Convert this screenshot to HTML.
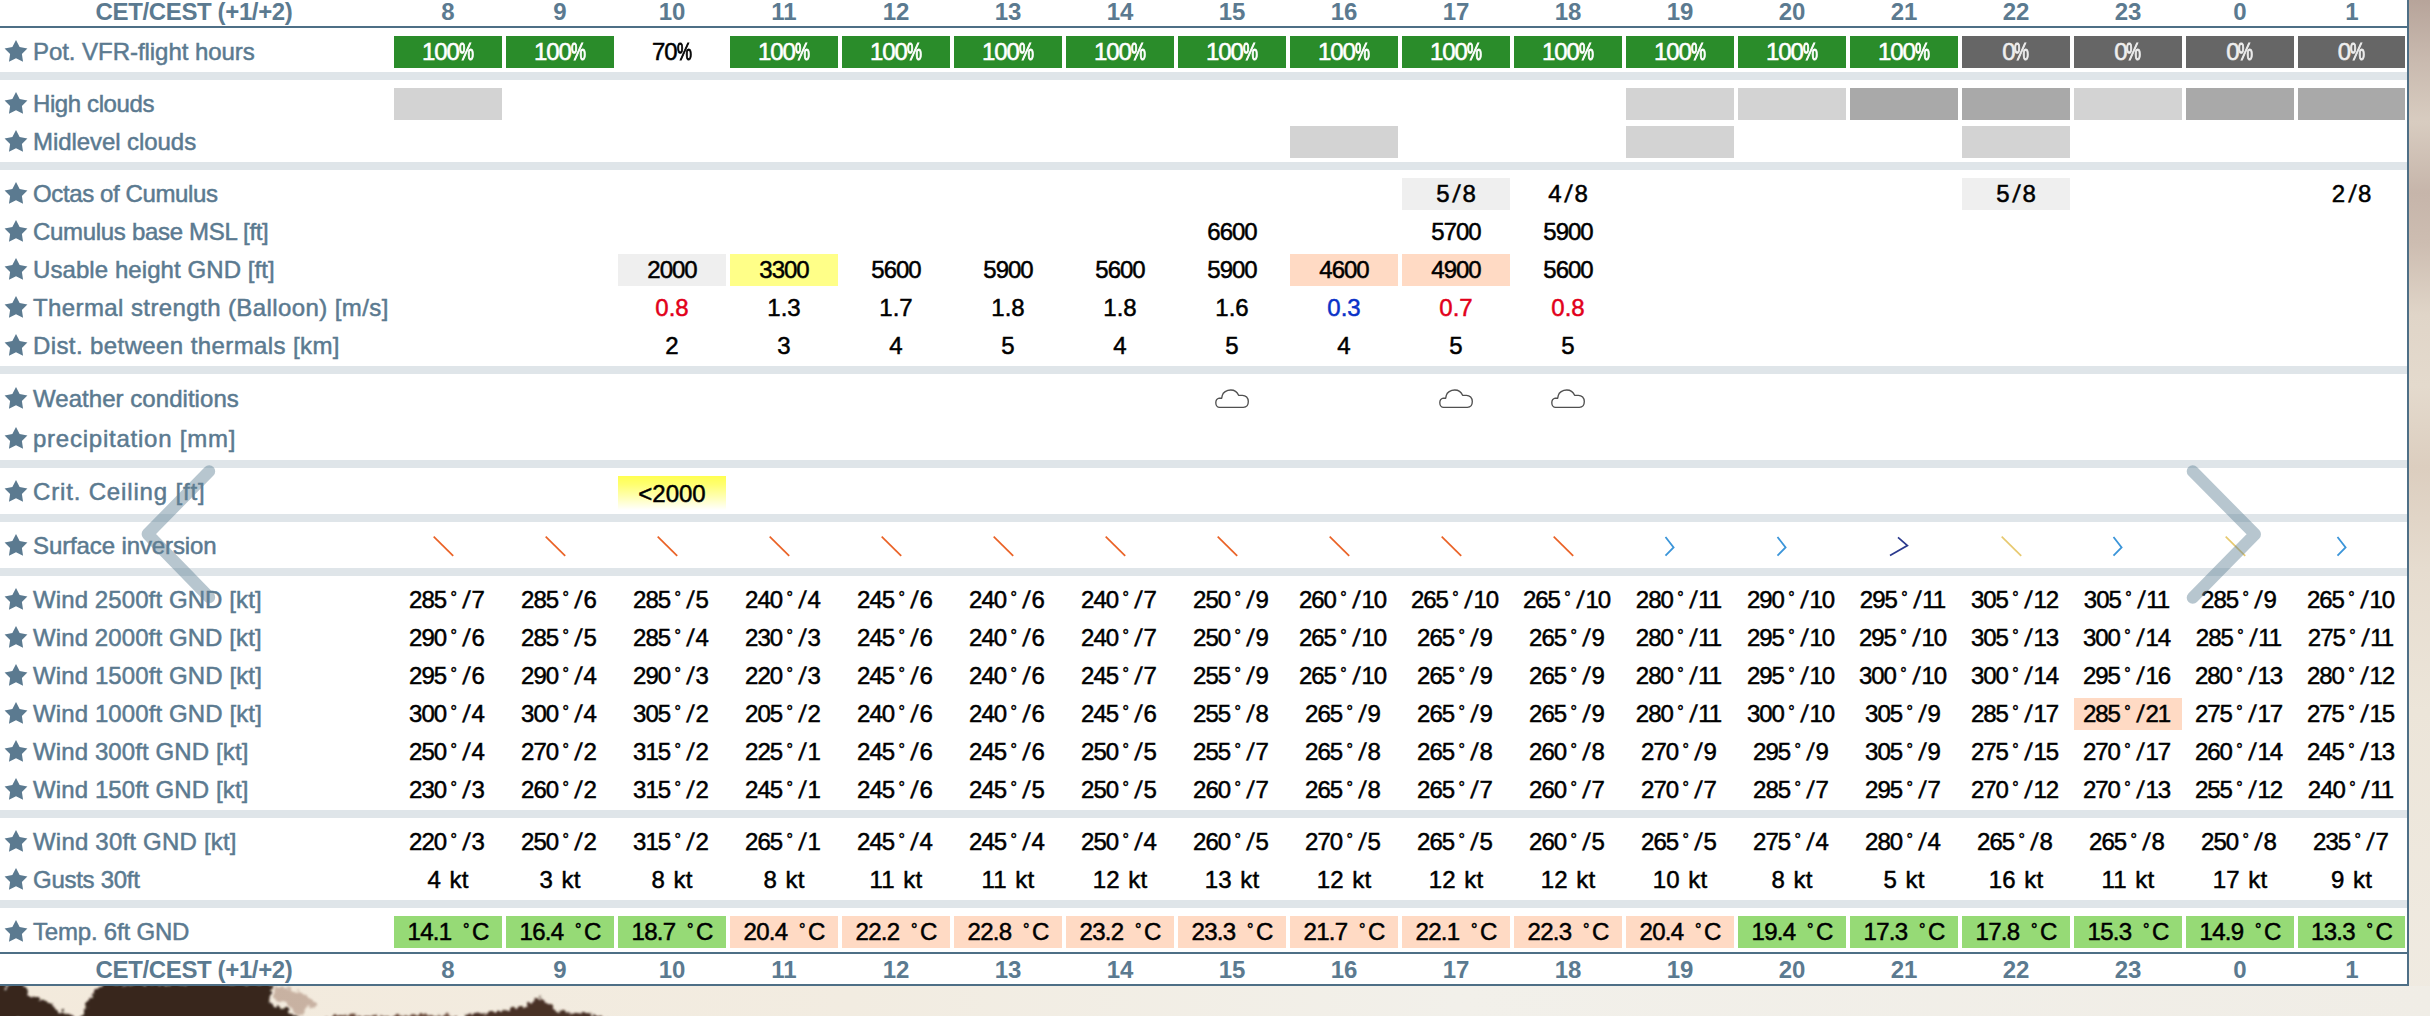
<!DOCTYPE html>
<html lang="en"><head><meta charset="utf-8"><title>Forecast table</title>
<style>
html,body{margin:0;padding:0}
body{width:2430px;height:1016px;overflow:hidden;position:relative;background:#efe7da;font-family:"Liberation Sans",sans-serif;font-size:24px;color:#000}
#bg{position:absolute;left:0;top:0;width:2430px;height:1016px}
#tb{position:absolute;left:0;top:0;width:2407px;height:984px;background:#fff;border-right:2px solid #4e6f86;border-bottom:2px solid #4e6f86}
.line{position:absolute;left:0;width:2407px;height:2px;background:#4e6f86}
.sep{position:absolute;left:0;width:2407px;height:8px;background:#dfe5e9}
.st{position:absolute;left:3.7px;width:24px;height:24px;fill:#5b7a90}
.lb{position:absolute;left:33px;height:32px;line-height:32px;white-space:nowrap;color:#5b7a90}
.hl{position:absolute;left:0;width:388px;text-align:center;height:32px;line-height:32px;font-weight:bold;color:#5b7a90;white-space:nowrap}
.c{position:absolute;width:108px;height:32px;line-height:32px;text-align:center;white-space:nowrap}
.c i{font-style:normal}
.c,.lb{-webkit-text-stroke:0.5px currentColor}
.c.h{-webkit-text-stroke:0}
.c.g,.c.z{-webkit-text-stroke:0.55px currentColor;letter-spacing:-1.2px}
.c .pc{-webkit-text-stroke:1px currentColor}
.oc .s{margin:0 2.6px 0 3.6px}
.w{width:105px;padding-right:3px}
.n{letter-spacing:-1px}
.w{letter-spacing:-1px}
.d{font-size:16px;position:relative;top:-5.4px;margin:0 4px 0 4.4px;letter-spacing:0}
.s{display:inline-block;transform:skewX(-6deg);margin:0 1.6px 0 2.4px;letter-spacing:0}
.pc{display:inline-block;transform:scaleX(0.7);transform-origin:0 50%;margin-right:-6px;letter-spacing:0}
.hl{letter-spacing:-0.37px}
.k{word-spacing:1.6px;letter-spacing:0.2px}
.t{letter-spacing:-0.7px;word-spacing:5.5px}
.dt{font-size:16px;position:relative;top:-5.4px;margin:0 2.6px 0 0;letter-spacing:0}
.h{font-weight:bold;color:#5b7a90}
.g{background:#2a8c2a;color:#fff}
.z{background:#666;color:#eee}
.lg{background:#d3d3d3}.dg{background:#a9a9a9}
.e{background:#efefef}.y{background:#ffff88}.pe{background:#ffdac4}.gr{background:#96da76}
.r{color:#e2001a}.b{color:#0a32c8}
.cc{height:34px;line-height:36px;background:linear-gradient(#ffff50,#ffff70 25%,#ffffb0 60%,#ffffff)}
.cl{position:absolute;left:27px;top:-1px;width:55px;height:33px;fill:none;stroke:#505050;stroke-width:1.35;stroke-linejoin:round}
.ov{position:absolute;left:0;top:0;pointer-events:none}
</style></head><body>
<svg id="bg" viewBox="0 0 2430 1016" preserveAspectRatio="none">
<defs>
<linearGradient id="gr" x1="0" y1="0" x2="0" y2="1">
<stop offset="0" stop-color="#b7a49a"/><stop offset="0.06" stop-color="#c9baaf"/><stop offset="0.12" stop-color="#d8ccc0"/>
<stop offset="0.19" stop-color="#c6b5aa"/><stop offset="0.24" stop-color="#cdbdb1"/><stop offset="0.31" stop-color="#e0d5c8"/>
<stop offset="0.38" stop-color="#e4dacd"/><stop offset="0.46" stop-color="#dccebf"/><stop offset="0.56" stop-color="#e6dccf"/>
<stop offset="0.7" stop-color="#ece5d9"/><stop offset="1" stop-color="#f0ebe2"/>
</linearGradient>
<linearGradient id="gb" x1="0" y1="0" x2="1" y2="0">
<stop offset="0" stop-color="#f3eadc"/><stop offset="0.35" stop-color="#f2ece1"/><stop offset="0.6" stop-color="#f2f0ea"/><stop offset="1" stop-color="#f0ede6"/>
</linearGradient>
<filter id="bl" x="-5%" y="-50%" width="110%" height="200%"><feTurbulence type="fractalNoise" baseFrequency="0.18" numOctaves="2" seed="7" result="n"/><feDisplacementMap in="SourceGraphic" in2="n" scale="9" xChannelSelector="R" yChannelSelector="G"/><feGaussianBlur stdDeviation="0.9"/></filter>
</defs>
<rect x="2409" y="0" width="21" height="1016" fill="url(#gr)"/>
<rect x="0" y="986" width="2430" height="30" fill="url(#gb)"/>
<g filter="url(#bl)" fill="#38251f">
<path d="M-5 984 L3 984 L5 990 L9 984 L25 984 L27 990 L29 996 L40 999 L50 1003 L55 1008 L60 1011 L70 1014 L80 1020 L-5 1020 Z"/>
<path d="M101 984 L122 984 L124 988 L128 984 L275 984 L272 990 L270 996 L269 1003 L280 1007 L290 1011 L296 1016 L302 1022 L78 1022 L83 1012 L86 1006 L88 1001 L92 996 L96 990 Z"/>
<path d="M456 1020 L470 1014 L492 1013 L510 1009 L524 1007 L534 1001 L541 998.5 L548 1003 L556 1010 L575 1013 L600 1016 L610 1020 Z" fill="#4a3128"/>
<path d="M320 1020 L335 1015 L380 1016.5 L420 1015 L456 1016 L456 1020 Z" fill="#6a4c3c"/>
</g>
<g fill="#7a4a34" opacity="0.35" filter="url(#bl)">
<path d="M276 986 L288 987 L292 992 L300 990 L306 996 L314 1000 L318 1006 L306 1008 L300 1016 L292 1010 L284 1003 L274 1000 Z"/>
</g>
</svg>
<div id="tb">
<div class="hl" style="top:-4px">CET/CEST (+1/+2)</div>
<div class="c h" style="left:394px;top:-4px">8</div>
<div class="c h" style="left:506px;top:-4px">9</div>
<div class="c h" style="left:618px;top:-4px">10</div>
<div class="c h" style="left:730px;top:-4px">11</div>
<div class="c h" style="left:842px;top:-4px">12</div>
<div class="c h" style="left:954px;top:-4px">13</div>
<div class="c h" style="left:1066px;top:-4px">14</div>
<div class="c h" style="left:1178px;top:-4px">15</div>
<div class="c h" style="left:1290px;top:-4px">16</div>
<div class="c h" style="left:1402px;top:-4px">17</div>
<div class="c h" style="left:1514px;top:-4px">18</div>
<div class="c h" style="left:1626px;top:-4px">19</div>
<div class="c h" style="left:1738px;top:-4px">20</div>
<div class="c h" style="left:1850px;top:-4px">21</div>
<div class="c h" style="left:1962px;top:-4px">22</div>
<div class="c h" style="left:2074px;top:-4px">23</div>
<div class="c h" style="left:2186px;top:-4px">0</div>
<div class="c h" style="left:2298px;top:-4px">1</div>
<div class="line" style="top:26px"></div>
<svg class="st" style="top:40.0px" viewBox="0 0 24 24"><polygon points="12.00,0.10 15.64,7.08 23.41,8.39 17.90,14.02 19.05,21.81 12.00,18.30 4.95,21.81 6.10,14.02 0.59,8.39 8.36,7.08"/></svg>
<div class="lb" style="top:36px;letter-spacing:-0.05px">Pot. VFR-flight hours</div>
<div class="c n a g" style="left:394px;top:36px;">100<i class="pc">%</i></div>
<div class="c n a g" style="left:506px;top:36px;">100<i class="pc">%</i></div>
<div class="c n a p" style="left:618px;top:36px;">70<i class="pc">%</i></div>
<div class="c n a g" style="left:730px;top:36px;">100<i class="pc">%</i></div>
<div class="c n a g" style="left:842px;top:36px;">100<i class="pc">%</i></div>
<div class="c n a g" style="left:954px;top:36px;">100<i class="pc">%</i></div>
<div class="c n a g" style="left:1066px;top:36px;">100<i class="pc">%</i></div>
<div class="c n a g" style="left:1178px;top:36px;">100<i class="pc">%</i></div>
<div class="c n a g" style="left:1290px;top:36px;">100<i class="pc">%</i></div>
<div class="c n a g" style="left:1402px;top:36px;">100<i class="pc">%</i></div>
<div class="c n a g" style="left:1514px;top:36px;">100<i class="pc">%</i></div>
<div class="c n a g" style="left:1626px;top:36px;">100<i class="pc">%</i></div>
<div class="c n a g" style="left:1738px;top:36px;">100<i class="pc">%</i></div>
<div class="c n a g" style="left:1850px;top:36px;">100<i class="pc">%</i></div>
<div class="c n a z" style="left:1962px;top:36px;">0<i class="pc">%</i></div>
<div class="c n a z" style="left:2074px;top:36px;">0<i class="pc">%</i></div>
<div class="c n a z" style="left:2186px;top:36px;">0<i class="pc">%</i></div>
<div class="c n a z" style="left:2298px;top:36px;width:107px;">0<i class="pc">%</i></div>
<div class="sep" style="top:72px"></div>
<svg class="st" style="top:92.0px" viewBox="0 0 24 24"><polygon points="12.00,0.10 15.64,7.08 23.41,8.39 17.90,14.02 19.05,21.81 12.00,18.30 4.95,21.81 6.10,14.02 0.59,8.39 8.36,7.08"/></svg>
<div class="lb" style="top:88px;letter-spacing:-0.4px">High clouds</div>
<div class="c lg" style="left:394px;top:88px;"></div>
<div class="c lg" style="left:1626px;top:88px;"></div>
<div class="c lg" style="left:1738px;top:88px;"></div>
<div class="c dg" style="left:1850px;top:88px;"></div>
<div class="c dg" style="left:1962px;top:88px;"></div>
<div class="c lg" style="left:2074px;top:88px;"></div>
<div class="c dg" style="left:2186px;top:88px;"></div>
<div class="c dg" style="left:2298px;top:88px;width:107px;"></div>
<svg class="st" style="top:130.0px" viewBox="0 0 24 24"><polygon points="12.00,0.10 15.64,7.08 23.41,8.39 17.90,14.02 19.05,21.81 12.00,18.30 4.95,21.81 6.10,14.02 0.59,8.39 8.36,7.08"/></svg>
<div class="lb" style="top:126px;letter-spacing:-0.067px">Midlevel clouds</div>
<div class="c lg" style="left:1290px;top:126px;"></div>
<div class="c lg" style="left:1626px;top:126px;"></div>
<div class="c lg" style="left:1962px;top:126px;"></div>
<div class="sep" style="top:162px"></div>
<svg class="st" style="top:182.0px" viewBox="0 0 24 24"><polygon points="12.00,0.10 15.64,7.08 23.41,8.39 17.90,14.02 19.05,21.81 12.00,18.30 4.95,21.81 6.10,14.02 0.59,8.39 8.36,7.08"/></svg>
<div class="lb" style="top:178px;letter-spacing:-0.383px">Octas of Cumulus</div>
<div class="c e oc" style="left:1402px;top:178px;">5<i class="s">/</i>8</div>
<div class="c  oc" style="left:1514px;top:178px;">4<i class="s">/</i>8</div>
<div class="c e oc" style="left:1962px;top:178px;">5<i class="s">/</i>8</div>
<div class="c  oc" style="left:2298px;top:178px;width:107px;">2<i class="s">/</i>8</div>
<svg class="st" style="top:220.0px" viewBox="0 0 24 24"><polygon points="12.00,0.10 15.64,7.08 23.41,8.39 17.90,14.02 19.05,21.81 12.00,18.30 4.95,21.81 6.10,14.02 0.59,8.39 8.36,7.08"/></svg>
<div class="lb" style="top:216px;letter-spacing:-0.305px">Cumulus base MSL [ft]</div>
<div class="c n" style="left:1178px;top:216px;">6600</div>
<div class="c n" style="left:1402px;top:216px;">5700</div>
<div class="c n" style="left:1514px;top:216px;">5900</div>
<svg class="st" style="top:258.0px" viewBox="0 0 24 24"><polygon points="12.00,0.10 15.64,7.08 23.41,8.39 17.90,14.02 19.05,21.81 12.00,18.30 4.95,21.81 6.10,14.02 0.59,8.39 8.36,7.08"/></svg>
<div class="lb" style="top:254px;letter-spacing:0.079px">Usable height GND [ft]</div>
<div class="c e n" style="left:618px;top:254px;">2000</div>
<div class="c y n" style="left:730px;top:254px;">3300</div>
<div class="c  n" style="left:842px;top:254px;">5600</div>
<div class="c  n" style="left:954px;top:254px;">5900</div>
<div class="c  n" style="left:1066px;top:254px;">5600</div>
<div class="c  n" style="left:1178px;top:254px;">5900</div>
<div class="c pe n" style="left:1290px;top:254px;">4600</div>
<div class="c pe n" style="left:1402px;top:254px;">4900</div>
<div class="c  n" style="left:1514px;top:254px;">5600</div>
<svg class="st" style="top:296.0px" viewBox="0 0 24 24"><polygon points="12.00,0.10 15.64,7.08 23.41,8.39 17.90,14.02 19.05,21.81 12.00,18.30 4.95,21.81 6.10,14.02 0.59,8.39 8.36,7.08"/></svg>
<div class="lb" style="top:292px;letter-spacing:0.406px">Thermal strength (Balloon) [m/s]</div>
<div class="c r dp" style="left:618px;top:292px;">0.8</div>
<div class="c  dp" style="left:730px;top:292px;">1.3</div>
<div class="c  dp" style="left:842px;top:292px;">1.7</div>
<div class="c  dp" style="left:954px;top:292px;">1.8</div>
<div class="c  dp" style="left:1066px;top:292px;">1.8</div>
<div class="c  dp" style="left:1178px;top:292px;">1.6</div>
<div class="c b dp" style="left:1290px;top:292px;">0.3</div>
<div class="c r dp" style="left:1402px;top:292px;">0.7</div>
<div class="c r dp" style="left:1514px;top:292px;">0.8</div>
<svg class="st" style="top:334.0px" viewBox="0 0 24 24"><polygon points="12.00,0.10 15.64,7.08 23.41,8.39 17.90,14.02 19.05,21.81 12.00,18.30 4.95,21.81 6.10,14.02 0.59,8.39 8.36,7.08"/></svg>
<div class="lb" style="top:330px;letter-spacing:0.401px">Dist. between thermals [km]</div>
<div class="c " style="left:618px;top:330px;">2</div>
<div class="c " style="left:730px;top:330px;">3</div>
<div class="c " style="left:842px;top:330px;">4</div>
<div class="c " style="left:954px;top:330px;">5</div>
<div class="c " style="left:1066px;top:330px;">4</div>
<div class="c " style="left:1178px;top:330px;">5</div>
<div class="c " style="left:1290px;top:330px;">4</div>
<div class="c " style="left:1402px;top:330px;">5</div>
<div class="c " style="left:1514px;top:330px;">5</div>
<div class="sep" style="top:366px"></div>
<svg class="st" style="top:387.0px" viewBox="0 0 24 24"><polygon points="12.00,0.10 15.64,7.08 23.41,8.39 17.90,14.02 19.05,21.81 12.00,18.30 4.95,21.81 6.10,14.02 0.59,8.39 8.36,7.08"/></svg>
<div class="lb" style="top:383px;letter-spacing:0.046px">Weather conditions</div>
<div class="c " style="left:1178px;top:383px;"><svg class="cl" viewBox="0 0 55 33"><path d="M14.6 25.35 L38.3 25.35 C41.5 25.35 43.3 22.8 43.3 19.5 C43.3 16 40.8 13.3 37.4 13.3 L33.6 13.3 C32.2 10 29.5 8 25.8 8 C21.5 8 18 10.5 17.3 13.3 L16.7 16.2 L14.2 16.2 C11.8 16.8 10.8 18.8 10.8 20.8 C10.8 23.4 12.5 25.35 14.6 25.35 Z"/></svg></div>
<div class="c " style="left:1402px;top:383px;"><svg class="cl" viewBox="0 0 55 33"><path d="M14.6 25.35 L38.3 25.35 C41.5 25.35 43.3 22.8 43.3 19.5 C43.3 16 40.8 13.3 37.4 13.3 L33.6 13.3 C32.2 10 29.5 8 25.8 8 C21.5 8 18 10.5 17.3 13.3 L16.7 16.2 L14.2 16.2 C11.8 16.8 10.8 18.8 10.8 20.8 C10.8 23.4 12.5 25.35 14.6 25.35 Z"/></svg></div>
<div class="c " style="left:1514px;top:383px;"><svg class="cl" viewBox="0 0 55 33"><path d="M14.6 25.35 L38.3 25.35 C41.5 25.35 43.3 22.8 43.3 19.5 C43.3 16 40.8 13.3 37.4 13.3 L33.6 13.3 C32.2 10 29.5 8 25.8 8 C21.5 8 18 10.5 17.3 13.3 L16.7 16.2 L14.2 16.2 C11.8 16.8 10.8 18.8 10.8 20.8 C10.8 23.4 12.5 25.35 14.6 25.35 Z"/></svg></div>
<svg class="st" style="top:427.0px" viewBox="0 0 24 24"><polygon points="12.00,0.10 15.64,7.08 23.41,8.39 17.90,14.02 19.05,21.81 12.00,18.30 4.95,21.81 6.10,14.02 0.59,8.39 8.36,7.08"/></svg>
<div class="lb" style="top:423px;letter-spacing:0.762px">precipitation [mm]</div>
<div class="sep" style="top:460px"></div>
<svg class="st" style="top:480.0px" viewBox="0 0 24 24"><polygon points="12.00,0.10 15.64,7.08 23.41,8.39 17.90,14.02 19.05,21.81 12.00,18.30 4.95,21.81 6.10,14.02 0.59,8.39 8.36,7.08"/></svg>
<div class="lb" style="top:476px;letter-spacing:0.838px">Crit. Ceiling [ft]</div>
<div class="c cc" style="left:618px;top:476px">&lt;2000</div>
<div class="sep" style="top:514px"></div>
<svg class="st" style="top:534.0px" viewBox="0 0 24 24"><polygon points="12.00,0.10 15.64,7.08 23.41,8.39 17.90,14.02 19.05,21.81 12.00,18.30 4.95,21.81 6.10,14.02 0.59,8.39 8.36,7.08"/></svg>
<div class="lb" style="top:530px;letter-spacing:-0.113px">Surface inversion</div>
<svg class="ov" width="2430" height="1016" viewBox="0 0 2430 1016">
<line x1="433.7" y1="536.6" x2="453.2" y2="555.9" stroke="#ea6226" stroke-width="1.7"/>
<line x1="545.7" y1="536.6" x2="565.2" y2="555.9" stroke="#ea6226" stroke-width="1.7"/>
<line x1="657.7" y1="536.6" x2="677.2" y2="555.9" stroke="#ea6226" stroke-width="1.7"/>
<line x1="769.7" y1="536.6" x2="789.2" y2="555.9" stroke="#ea6226" stroke-width="1.7"/>
<line x1="881.7" y1="536.6" x2="901.2" y2="555.9" stroke="#ea6226" stroke-width="1.7"/>
<line x1="993.7" y1="536.6" x2="1013.2" y2="555.9" stroke="#ea6226" stroke-width="1.7"/>
<line x1="1105.7" y1="536.6" x2="1125.2" y2="555.9" stroke="#ea6226" stroke-width="1.7"/>
<line x1="1217.7" y1="536.6" x2="1237.2" y2="555.9" stroke="#ea6226" stroke-width="1.7"/>
<line x1="1329.7" y1="536.6" x2="1349.2" y2="555.9" stroke="#ea6226" stroke-width="1.7"/>
<line x1="1441.7" y1="536.6" x2="1461.2" y2="555.9" stroke="#ea6226" stroke-width="1.7"/>
<line x1="1553.7" y1="536.6" x2="1573.2" y2="555.9" stroke="#ea6226" stroke-width="1.7"/>
<polyline points="1665.5,537 1673.6,547.4 1665.5,555.6" stroke="#3b95d9" stroke-width="1.8" fill="none"/>
<polyline points="1777.5,537 1785.6,547.4 1777.5,555.6" stroke="#3b95d9" stroke-width="1.8" fill="none"/>
<polyline points="1898,537.3 1907.4,545.5 1890,555.4" stroke="#2b3a8e" stroke-width="1.7" fill="none"/>
<line x1="2001.7" y1="536.6" x2="2021.2" y2="555.9" stroke="#e7c970" stroke-width="1.7"/>
<polyline points="2113.5,537 2121.6,547.4 2113.5,555.6" stroke="#3b95d9" stroke-width="1.8" fill="none"/>
<line x1="2225.7" y1="536.6" x2="2245.2" y2="555.9" stroke="#e7c970" stroke-width="1.7"/>
<polyline points="2337.5,537 2345.6,547.4 2337.5,555.6" stroke="#3b95d9" stroke-width="1.8" fill="none"/>
</svg>
<div class="sep" style="top:568px"></div>
<svg class="st" style="top:588.0px" viewBox="0 0 24 24"><polygon points="12.00,0.10 15.64,7.08 23.41,8.39 17.90,14.02 19.05,21.81 12.00,18.30 4.95,21.81 6.10,14.02 0.59,8.39 8.36,7.08"/></svg>
<div class="lb" style="top:584px;letter-spacing:0.098px">Wind 2500ft GND [kt]</div>
<div class="c  w" style="left:394px;top:584px;">285<i class="d">°</i><i class="s">/</i>7</div>
<div class="c  w" style="left:506px;top:584px;">285<i class="d">°</i><i class="s">/</i>6</div>
<div class="c  w" style="left:618px;top:584px;">285<i class="d">°</i><i class="s">/</i>5</div>
<div class="c  w" style="left:730px;top:584px;">240<i class="d">°</i><i class="s">/</i>4</div>
<div class="c  w" style="left:842px;top:584px;">245<i class="d">°</i><i class="s">/</i>6</div>
<div class="c  w" style="left:954px;top:584px;">240<i class="d">°</i><i class="s">/</i>6</div>
<div class="c  w" style="left:1066px;top:584px;">240<i class="d">°</i><i class="s">/</i>7</div>
<div class="c  w" style="left:1178px;top:584px;">250<i class="d">°</i><i class="s">/</i>9</div>
<div class="c  w" style="left:1290px;top:584px;">260<i class="d">°</i><i class="s">/</i>10</div>
<div class="c  w" style="left:1402px;top:584px;">265<i class="d">°</i><i class="s">/</i>10</div>
<div class="c  w" style="left:1514px;top:584px;">265<i class="d">°</i><i class="s">/</i>10</div>
<div class="c  w" style="left:1626px;top:584px;">280<i class="d">°</i><i class="s">/</i>11</div>
<div class="c  w" style="left:1738px;top:584px;">290<i class="d">°</i><i class="s">/</i>10</div>
<div class="c  w" style="left:1850px;top:584px;">295<i class="d">°</i><i class="s">/</i>11</div>
<div class="c  w" style="left:1962px;top:584px;">305<i class="d">°</i><i class="s">/</i>12</div>
<div class="c  w" style="left:2074px;top:584px;">305<i class="d">°</i><i class="s">/</i>11</div>
<div class="c  w" style="left:2186px;top:584px;">285<i class="d">°</i><i class="s">/</i>9</div>
<div class="c  w" style="left:2298px;top:584px;">265<i class="d">°</i><i class="s">/</i>10</div>
<svg class="st" style="top:626.0px" viewBox="0 0 24 24"><polygon points="12.00,0.10 15.64,7.08 23.41,8.39 17.90,14.02 19.05,21.81 12.00,18.30 4.95,21.81 6.10,14.02 0.59,8.39 8.36,7.08"/></svg>
<div class="lb" style="top:622px;letter-spacing:0.098px">Wind 2000ft GND [kt]</div>
<div class="c  w" style="left:394px;top:622px;">290<i class="d">°</i><i class="s">/</i>6</div>
<div class="c  w" style="left:506px;top:622px;">285<i class="d">°</i><i class="s">/</i>5</div>
<div class="c  w" style="left:618px;top:622px;">285<i class="d">°</i><i class="s">/</i>4</div>
<div class="c  w" style="left:730px;top:622px;">230<i class="d">°</i><i class="s">/</i>3</div>
<div class="c  w" style="left:842px;top:622px;">245<i class="d">°</i><i class="s">/</i>6</div>
<div class="c  w" style="left:954px;top:622px;">240<i class="d">°</i><i class="s">/</i>6</div>
<div class="c  w" style="left:1066px;top:622px;">240<i class="d">°</i><i class="s">/</i>7</div>
<div class="c  w" style="left:1178px;top:622px;">250<i class="d">°</i><i class="s">/</i>9</div>
<div class="c  w" style="left:1290px;top:622px;">265<i class="d">°</i><i class="s">/</i>10</div>
<div class="c  w" style="left:1402px;top:622px;">265<i class="d">°</i><i class="s">/</i>9</div>
<div class="c  w" style="left:1514px;top:622px;">265<i class="d">°</i><i class="s">/</i>9</div>
<div class="c  w" style="left:1626px;top:622px;">280<i class="d">°</i><i class="s">/</i>11</div>
<div class="c  w" style="left:1738px;top:622px;">295<i class="d">°</i><i class="s">/</i>10</div>
<div class="c  w" style="left:1850px;top:622px;">295<i class="d">°</i><i class="s">/</i>10</div>
<div class="c  w" style="left:1962px;top:622px;">305<i class="d">°</i><i class="s">/</i>13</div>
<div class="c  w" style="left:2074px;top:622px;">300<i class="d">°</i><i class="s">/</i>14</div>
<div class="c  w" style="left:2186px;top:622px;">285<i class="d">°</i><i class="s">/</i>11</div>
<div class="c  w" style="left:2298px;top:622px;">275<i class="d">°</i><i class="s">/</i>11</div>
<svg class="st" style="top:664.0px" viewBox="0 0 24 24"><polygon points="12.00,0.10 15.64,7.08 23.41,8.39 17.90,14.02 19.05,21.81 12.00,18.30 4.95,21.81 6.10,14.02 0.59,8.39 8.36,7.08"/></svg>
<div class="lb" style="top:660px;letter-spacing:0.109px">Wind 1500ft GND [kt]</div>
<div class="c  w" style="left:394px;top:660px;">295<i class="d">°</i><i class="s">/</i>6</div>
<div class="c  w" style="left:506px;top:660px;">290<i class="d">°</i><i class="s">/</i>4</div>
<div class="c  w" style="left:618px;top:660px;">290<i class="d">°</i><i class="s">/</i>3</div>
<div class="c  w" style="left:730px;top:660px;">220<i class="d">°</i><i class="s">/</i>3</div>
<div class="c  w" style="left:842px;top:660px;">245<i class="d">°</i><i class="s">/</i>6</div>
<div class="c  w" style="left:954px;top:660px;">240<i class="d">°</i><i class="s">/</i>6</div>
<div class="c  w" style="left:1066px;top:660px;">245<i class="d">°</i><i class="s">/</i>7</div>
<div class="c  w" style="left:1178px;top:660px;">255<i class="d">°</i><i class="s">/</i>9</div>
<div class="c  w" style="left:1290px;top:660px;">265<i class="d">°</i><i class="s">/</i>10</div>
<div class="c  w" style="left:1402px;top:660px;">265<i class="d">°</i><i class="s">/</i>9</div>
<div class="c  w" style="left:1514px;top:660px;">265<i class="d">°</i><i class="s">/</i>9</div>
<div class="c  w" style="left:1626px;top:660px;">280<i class="d">°</i><i class="s">/</i>11</div>
<div class="c  w" style="left:1738px;top:660px;">295<i class="d">°</i><i class="s">/</i>10</div>
<div class="c  w" style="left:1850px;top:660px;">300<i class="d">°</i><i class="s">/</i>10</div>
<div class="c  w" style="left:1962px;top:660px;">300<i class="d">°</i><i class="s">/</i>14</div>
<div class="c  w" style="left:2074px;top:660px;">295<i class="d">°</i><i class="s">/</i>16</div>
<div class="c  w" style="left:2186px;top:660px;">280<i class="d">°</i><i class="s">/</i>13</div>
<div class="c  w" style="left:2298px;top:660px;">280<i class="d">°</i><i class="s">/</i>12</div>
<svg class="st" style="top:702.0px" viewBox="0 0 24 24"><polygon points="12.00,0.10 15.64,7.08 23.41,8.39 17.90,14.02 19.05,21.81 12.00,18.30 4.95,21.81 6.10,14.02 0.59,8.39 8.36,7.08"/></svg>
<div class="lb" style="top:698px;letter-spacing:0.109px">Wind 1000ft GND [kt]</div>
<div class="c  w" style="left:394px;top:698px;">300<i class="d">°</i><i class="s">/</i>4</div>
<div class="c  w" style="left:506px;top:698px;">300<i class="d">°</i><i class="s">/</i>4</div>
<div class="c  w" style="left:618px;top:698px;">305<i class="d">°</i><i class="s">/</i>2</div>
<div class="c  w" style="left:730px;top:698px;">205<i class="d">°</i><i class="s">/</i>2</div>
<div class="c  w" style="left:842px;top:698px;">240<i class="d">°</i><i class="s">/</i>6</div>
<div class="c  w" style="left:954px;top:698px;">240<i class="d">°</i><i class="s">/</i>6</div>
<div class="c  w" style="left:1066px;top:698px;">245<i class="d">°</i><i class="s">/</i>6</div>
<div class="c  w" style="left:1178px;top:698px;">255<i class="d">°</i><i class="s">/</i>8</div>
<div class="c  w" style="left:1290px;top:698px;">265<i class="d">°</i><i class="s">/</i>9</div>
<div class="c  w" style="left:1402px;top:698px;">265<i class="d">°</i><i class="s">/</i>9</div>
<div class="c  w" style="left:1514px;top:698px;">265<i class="d">°</i><i class="s">/</i>9</div>
<div class="c  w" style="left:1626px;top:698px;">280<i class="d">°</i><i class="s">/</i>11</div>
<div class="c  w" style="left:1738px;top:698px;">300<i class="d">°</i><i class="s">/</i>10</div>
<div class="c  w" style="left:1850px;top:698px;">305<i class="d">°</i><i class="s">/</i>9</div>
<div class="c  w" style="left:1962px;top:698px;">285<i class="d">°</i><i class="s">/</i>17</div>
<div class="c pe w" style="left:2074px;top:698px;">285<i class="d">°</i><i class="s">/</i>21</div>
<div class="c  w" style="left:2186px;top:698px;">275<i class="d">°</i><i class="s">/</i>17</div>
<div class="c  w" style="left:2298px;top:698px;">275<i class="d">°</i><i class="s">/</i>15</div>
<svg class="st" style="top:740.0px" viewBox="0 0 24 24"><polygon points="12.00,0.10 15.64,7.08 23.41,8.39 17.90,14.02 19.05,21.81 12.00,18.30 4.95,21.81 6.10,14.02 0.59,8.39 8.36,7.08"/></svg>
<div class="lb" style="top:736px;letter-spacing:0.109px">Wind 300ft GND [kt]</div>
<div class="c  w" style="left:394px;top:736px;">250<i class="d">°</i><i class="s">/</i>4</div>
<div class="c  w" style="left:506px;top:736px;">270<i class="d">°</i><i class="s">/</i>2</div>
<div class="c  w" style="left:618px;top:736px;">315<i class="d">°</i><i class="s">/</i>2</div>
<div class="c  w" style="left:730px;top:736px;">225<i class="d">°</i><i class="s">/</i>1</div>
<div class="c  w" style="left:842px;top:736px;">245<i class="d">°</i><i class="s">/</i>6</div>
<div class="c  w" style="left:954px;top:736px;">245<i class="d">°</i><i class="s">/</i>6</div>
<div class="c  w" style="left:1066px;top:736px;">250<i class="d">°</i><i class="s">/</i>5</div>
<div class="c  w" style="left:1178px;top:736px;">255<i class="d">°</i><i class="s">/</i>7</div>
<div class="c  w" style="left:1290px;top:736px;">265<i class="d">°</i><i class="s">/</i>8</div>
<div class="c  w" style="left:1402px;top:736px;">265<i class="d">°</i><i class="s">/</i>8</div>
<div class="c  w" style="left:1514px;top:736px;">260<i class="d">°</i><i class="s">/</i>8</div>
<div class="c  w" style="left:1626px;top:736px;">270<i class="d">°</i><i class="s">/</i>9</div>
<div class="c  w" style="left:1738px;top:736px;">295<i class="d">°</i><i class="s">/</i>9</div>
<div class="c  w" style="left:1850px;top:736px;">305<i class="d">°</i><i class="s">/</i>9</div>
<div class="c  w" style="left:1962px;top:736px;">275<i class="d">°</i><i class="s">/</i>15</div>
<div class="c  w" style="left:2074px;top:736px;">270<i class="d">°</i><i class="s">/</i>17</div>
<div class="c  w" style="left:2186px;top:736px;">260<i class="d">°</i><i class="s">/</i>14</div>
<div class="c  w" style="left:2298px;top:736px;">245<i class="d">°</i><i class="s">/</i>13</div>
<svg class="st" style="top:778.0px" viewBox="0 0 24 24"><polygon points="12.00,0.10 15.64,7.08 23.41,8.39 17.90,14.02 19.05,21.81 12.00,18.30 4.95,21.81 6.10,14.02 0.59,8.39 8.36,7.08"/></svg>
<div class="lb" style="top:774px;letter-spacing:0.109px">Wind 150ft GND [kt]</div>
<div class="c  w" style="left:394px;top:774px;">230<i class="d">°</i><i class="s">/</i>3</div>
<div class="c  w" style="left:506px;top:774px;">260<i class="d">°</i><i class="s">/</i>2</div>
<div class="c  w" style="left:618px;top:774px;">315<i class="d">°</i><i class="s">/</i>2</div>
<div class="c  w" style="left:730px;top:774px;">245<i class="d">°</i><i class="s">/</i>1</div>
<div class="c  w" style="left:842px;top:774px;">245<i class="d">°</i><i class="s">/</i>6</div>
<div class="c  w" style="left:954px;top:774px;">245<i class="d">°</i><i class="s">/</i>5</div>
<div class="c  w" style="left:1066px;top:774px;">250<i class="d">°</i><i class="s">/</i>5</div>
<div class="c  w" style="left:1178px;top:774px;">260<i class="d">°</i><i class="s">/</i>7</div>
<div class="c  w" style="left:1290px;top:774px;">265<i class="d">°</i><i class="s">/</i>8</div>
<div class="c  w" style="left:1402px;top:774px;">265<i class="d">°</i><i class="s">/</i>7</div>
<div class="c  w" style="left:1514px;top:774px;">260<i class="d">°</i><i class="s">/</i>7</div>
<div class="c  w" style="left:1626px;top:774px;">270<i class="d">°</i><i class="s">/</i>7</div>
<div class="c  w" style="left:1738px;top:774px;">285<i class="d">°</i><i class="s">/</i>7</div>
<div class="c  w" style="left:1850px;top:774px;">295<i class="d">°</i><i class="s">/</i>7</div>
<div class="c  w" style="left:1962px;top:774px;">270<i class="d">°</i><i class="s">/</i>12</div>
<div class="c  w" style="left:2074px;top:774px;">270<i class="d">°</i><i class="s">/</i>13</div>
<div class="c  w" style="left:2186px;top:774px;">255<i class="d">°</i><i class="s">/</i>12</div>
<div class="c  w" style="left:2298px;top:774px;">240<i class="d">°</i><i class="s">/</i>11</div>
<div class="sep" style="top:810px"></div>
<svg class="st" style="top:830.0px" viewBox="0 0 24 24"><polygon points="12.00,0.10 15.64,7.08 23.41,8.39 17.90,14.02 19.05,21.81 12.00,18.30 4.95,21.81 6.10,14.02 0.59,8.39 8.36,7.08"/></svg>
<div class="lb" style="top:826px;letter-spacing:0.204px">Wind 30ft GND [kt]</div>
<div class="c  w" style="left:394px;top:826px;">220<i class="d">°</i><i class="s">/</i>3</div>
<div class="c  w" style="left:506px;top:826px;">250<i class="d">°</i><i class="s">/</i>2</div>
<div class="c  w" style="left:618px;top:826px;">315<i class="d">°</i><i class="s">/</i>2</div>
<div class="c  w" style="left:730px;top:826px;">265<i class="d">°</i><i class="s">/</i>1</div>
<div class="c  w" style="left:842px;top:826px;">245<i class="d">°</i><i class="s">/</i>4</div>
<div class="c  w" style="left:954px;top:826px;">245<i class="d">°</i><i class="s">/</i>4</div>
<div class="c  w" style="left:1066px;top:826px;">250<i class="d">°</i><i class="s">/</i>4</div>
<div class="c  w" style="left:1178px;top:826px;">260<i class="d">°</i><i class="s">/</i>5</div>
<div class="c  w" style="left:1290px;top:826px;">270<i class="d">°</i><i class="s">/</i>5</div>
<div class="c  w" style="left:1402px;top:826px;">265<i class="d">°</i><i class="s">/</i>5</div>
<div class="c  w" style="left:1514px;top:826px;">260<i class="d">°</i><i class="s">/</i>5</div>
<div class="c  w" style="left:1626px;top:826px;">265<i class="d">°</i><i class="s">/</i>5</div>
<div class="c  w" style="left:1738px;top:826px;">275<i class="d">°</i><i class="s">/</i>4</div>
<div class="c  w" style="left:1850px;top:826px;">280<i class="d">°</i><i class="s">/</i>4</div>
<div class="c  w" style="left:1962px;top:826px;">265<i class="d">°</i><i class="s">/</i>8</div>
<div class="c  w" style="left:2074px;top:826px;">265<i class="d">°</i><i class="s">/</i>8</div>
<div class="c  w" style="left:2186px;top:826px;">250<i class="d">°</i><i class="s">/</i>8</div>
<div class="c  w" style="left:2298px;top:826px;">235<i class="d">°</i><i class="s">/</i>7</div>
<svg class="st" style="top:868.0px" viewBox="0 0 24 24"><polygon points="12.00,0.10 15.64,7.08 23.41,8.39 17.90,14.02 19.05,21.81 12.00,18.30 4.95,21.81 6.10,14.02 0.59,8.39 8.36,7.08"/></svg>
<div class="lb" style="top:864px;letter-spacing:-0.284px">Gusts 30ft</div>
<div class="c k" style="left:394px;top:864px;">4 kt</div>
<div class="c k" style="left:506px;top:864px;">3 kt</div>
<div class="c k" style="left:618px;top:864px;">8 kt</div>
<div class="c k" style="left:730px;top:864px;">8 kt</div>
<div class="c k" style="left:842px;top:864px;">11 kt</div>
<div class="c k" style="left:954px;top:864px;">11 kt</div>
<div class="c k" style="left:1066px;top:864px;">12 kt</div>
<div class="c k" style="left:1178px;top:864px;">13 kt</div>
<div class="c k" style="left:1290px;top:864px;">12 kt</div>
<div class="c k" style="left:1402px;top:864px;">12 kt</div>
<div class="c k" style="left:1514px;top:864px;">12 kt</div>
<div class="c k" style="left:1626px;top:864px;">10 kt</div>
<div class="c k" style="left:1738px;top:864px;">8 kt</div>
<div class="c k" style="left:1850px;top:864px;">5 kt</div>
<div class="c k" style="left:1962px;top:864px;">16 kt</div>
<div class="c k" style="left:2074px;top:864px;">11 kt</div>
<div class="c k" style="left:2186px;top:864px;">17 kt</div>
<div class="c k" style="left:2298px;top:864px;width:107px;">9 kt</div>
<div class="sep" style="top:900px"></div>
<svg class="st" style="top:920.0px" viewBox="0 0 24 24"><polygon points="12.00,0.10 15.64,7.08 23.41,8.39 17.90,14.02 19.05,21.81 12.00,18.30 4.95,21.81 6.10,14.02 0.59,8.39 8.36,7.08"/></svg>
<div class="lb" style="top:916px;letter-spacing:-0.192px">Temp. 6ft GND</div>
<div class="c gr t" style="left:394px;top:916px;">14.1 <i class="dt">°</i>C</div>
<div class="c gr t" style="left:506px;top:916px;">16.4 <i class="dt">°</i>C</div>
<div class="c gr t" style="left:618px;top:916px;">18.7 <i class="dt">°</i>C</div>
<div class="c pe t" style="left:730px;top:916px;">20.4 <i class="dt">°</i>C</div>
<div class="c pe t" style="left:842px;top:916px;">22.2 <i class="dt">°</i>C</div>
<div class="c pe t" style="left:954px;top:916px;">22.8 <i class="dt">°</i>C</div>
<div class="c pe t" style="left:1066px;top:916px;">23.2 <i class="dt">°</i>C</div>
<div class="c pe t" style="left:1178px;top:916px;">23.3 <i class="dt">°</i>C</div>
<div class="c pe t" style="left:1290px;top:916px;">21.7 <i class="dt">°</i>C</div>
<div class="c pe t" style="left:1402px;top:916px;">22.1 <i class="dt">°</i>C</div>
<div class="c pe t" style="left:1514px;top:916px;">22.3 <i class="dt">°</i>C</div>
<div class="c pe t" style="left:1626px;top:916px;">20.4 <i class="dt">°</i>C</div>
<div class="c gr t" style="left:1738px;top:916px;">19.4 <i class="dt">°</i>C</div>
<div class="c gr t" style="left:1850px;top:916px;">17.3 <i class="dt">°</i>C</div>
<div class="c gr t" style="left:1962px;top:916px;">17.8 <i class="dt">°</i>C</div>
<div class="c gr t" style="left:2074px;top:916px;">15.3 <i class="dt">°</i>C</div>
<div class="c gr t" style="left:2186px;top:916px;">14.9 <i class="dt">°</i>C</div>
<div class="c gr t" style="left:2298px;top:916px;width:107px;">13.3 <i class="dt">°</i>C</div>
<div class="line" style="top:952px"></div>
<div class="hl" style="top:954px">CET/CEST (+1/+2)</div>
<div class="c h" style="left:394px;top:954px">8</div>
<div class="c h" style="left:506px;top:954px">9</div>
<div class="c h" style="left:618px;top:954px">10</div>
<div class="c h" style="left:730px;top:954px">11</div>
<div class="c h" style="left:842px;top:954px">12</div>
<div class="c h" style="left:954px;top:954px">13</div>
<div class="c h" style="left:1066px;top:954px">14</div>
<div class="c h" style="left:1178px;top:954px">15</div>
<div class="c h" style="left:1290px;top:954px">16</div>
<div class="c h" style="left:1402px;top:954px">17</div>
<div class="c h" style="left:1514px;top:954px">18</div>
<div class="c h" style="left:1626px;top:954px">19</div>
<div class="c h" style="left:1738px;top:954px">20</div>
<div class="c h" style="left:1850px;top:954px">21</div>
<div class="c h" style="left:1962px;top:954px">22</div>
<div class="c h" style="left:2074px;top:954px">23</div>
<div class="c h" style="left:2186px;top:954px">0</div>
<div class="c h" style="left:2298px;top:954px">1</div>
</div>
<svg id="nav" class="ov" width="2430" height="1016" viewBox="0 0 2430 1016">
<polyline points="209.2,471.3 147.6,534 209.2,597.2" fill="none" stroke="rgba(96,128,148,0.45)" stroke-width="12" stroke-linecap="round" stroke-linejoin="round"/>
<polyline points="2192.7,471.2 2255,534.3 2192.7,597.8" fill="none" stroke="rgba(96,128,148,0.45)" stroke-width="12" stroke-linecap="round" stroke-linejoin="round"/>
</svg>
</body></html>
